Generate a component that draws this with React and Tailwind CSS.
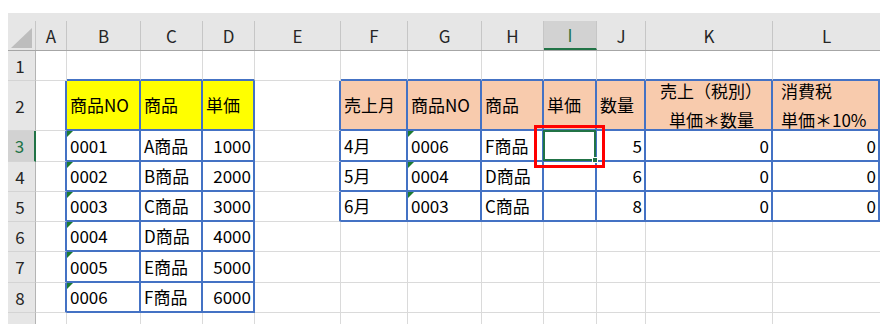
const COLS = ['A', 'B', 'C', 'D', 'E', 'F', 'G', 'H', 'I', 'J', 'K', 'L'];
const ROWS = [1, 2, 3, 4, 5, 6, 7, 8, 9];

const inT1 = (r, c) => r >= 2 && r <= 8 && c >= 1 && c <= 3;
const inT2 = (r, c) => r >= 2 && r <= 5 && c >= 5 && c <= 11;
const inTable = (r, c) => inT1(r, c) || inT2(r, c);

// cell contents by row -> column index
const sheet = {
  2: {
    1: { v: '商品NO' }, 2: { v: '商品' }, 3: { v: '単価' },
    5: { v: '売上月' }, 6: { v: '商品NO' }, 7: { v: '商品' }, 8: { v: '単価' }, 9: { v: '数量' },
    10: { lines: ['売上（税別）', '単価＊数量'], pads: ['pl-[11px]', 'pl-[20px]'] },
    11: { lines: ['消費税', '単価＊10%'], pads: ['pl-[5px]', 'pl-[5px]'] },
  },
};

const products = [
  ['0001', 'A商品', '1000'],
  ['0002', 'B商品', '2000'],
  ['0003', 'C商品', '3000'],
  ['0004', 'D商品', '4000'],
  ['0005', 'E商品', '5000'],
  ['0006', 'F商品', '6000'],
];
products.forEach((p, i) => {
  sheet[i + 3] = { 1: { v: p[0], tri: true }, 2: { v: p[1] }, 3: { v: p[2], right: true } };
});

const sales = [
  ['4月', '0006', 'F商品', '5'],
  ['5月', '0004', 'D商品', '6'],
  ['6月', '0003', 'C商品', '8'],
];
sales.forEach((s, i) => {
  Object.assign(sheet[i + 3], {
    5: { v: s[0] },
    6: { v: s[1], tri: true },
    7: { v: s[2] },
    8: { v: '' },
    9: { v: s[3], right: true },
    10: { v: '0', right: true },
    11: { v: '0', right: true },
  });
});

function Corner() {
  return (
    <div className="flex flex-col justify-end bg-[#e6e6e6] border-b border-b-[#a6a6a6]">
      <div className="h-[29px] flex items-end justify-end pr-[3px] pb-[2px] border-r border-r-[#c6c6c6]">
        <svg width="21" height="20" viewBox="0 0 21 20">
          <polygon points="21,0 21,20 0,20" fill="#bdbdbd" />
        </svg>
      </div>
    </div>
  );
}

function ColHeader({ name, last }) {
  const active = name === 'I';
  return (
    <div className="flex flex-col justify-end bg-[#e6e6e6] border-b border-b-[#a6a6a6]">
      <div
        className={`h-[29px] flex items-center justify-center ${last ? '' : 'border-r border-r-[#c6c6c6]'} ${
          active ? 'bg-[#d2d2d2] border-b-2 border-b-[#217346] text-[#217346]' : 'text-[#262626]'
        }`}
      >
        {name}
      </div>
    </div>
  );
}

function RowHeader({ r }) {
  const active = r === 3;
  return (
    <div
      className={`flex items-center justify-center pr-[3px] border-b border-b-[#d4d4d4] ${
        active
          ? 'bg-[#d2d2d2] border-r-2 border-r-[#217346] text-[#217346]'
          : 'bg-[#e6e6e6] border-r border-r-[#b4b4b4] text-[#262626]'
      }`}
    >
      {/* row 9 is only a sliver at the bottom, its number is out of view */}
      {r < 9 ? r : ''}
    </div>
  );
}

function Cell({ r, c }) {
  const cell = (sheet[r] && sheet[r][c]) || null;
  const right =
    inTable(r, c) || inTable(r, c + 1)
      ? 'border-r-2 border-r-[#4472c4]'
      : c === 11
      ? ''
      : 'border-r border-r-[#dadada]';
  const bottom =
    inTable(r, c) || inTable(r + 1, c) ? 'border-b-2 border-b-[#4472c4]' : 'border-b border-b-[#dadada]';
  let bg = 'bg-white';
  if (r === 2 && inT1(r, c)) bg = 'bg-[#ffff00]';
  if (r === 2 && inT2(r, c)) bg = 'bg-[#f8cbad]';
  const selected = r === 3 && c === 8;

  return (
    <div className={`relative flex items-center ${cell && cell.right ? 'justify-end pr-[2px]' : 'pl-[3px]'} ${right} ${bottom} ${bg} ${selected ? 'z-10' : ''}`}>
      {cell && cell.tri && (
        <div className="absolute left-0 top-0 w-0 h-0 border-t-[6px] border-r-[6px] border-t-[#1d7a32] border-r-transparent" />
      )}
      {cell && cell.lines ? (
        <div className="flex flex-col leading-[29px] whitespace-nowrap">
          {cell.lines.map((l, i) => (
            <span key={i} className={cell.pads[i]}>{l}</span>
          ))}
        </div>
      ) : (
        cell && <span className="whitespace-nowrap">{cell.v}</span>
      )}
      {selected && (
        <>
          <div className="absolute -left-px -top-px -right-px -bottom-px border-2 border-[#217346]">
            <div className="absolute -right-[4px] -bottom-[4px] w-[6px] h-[6px] bg-[#217346] border border-white" />
          </div>
          <div className="absolute -left-[10px] -top-[6px] -right-[10px] -bottom-[8px] border-[3px] border-[#ff0000]" />
        </>
      )}
    </div>
  );
}

export default function App() {
  return (
    <div className="w-[894px] h-[324px] overflow-hidden bg-white pt-[13px] pl-[8px] font-['Noto_Sans_CJK_JP',sans-serif] text-[17px] text-black">
      <div className="grid w-[872px] grid-cols-[28px_31px_74px_62px_52px_86px_67px_74px_62px_53px_49px_127px_107px] grid-rows-[38px_30px_50px_31px_30px_30px_30px_31px_30px_30px]">
        <Corner />
        {COLS.map((name, i) => (
          <ColHeader key={name} name={name} last={i === COLS.length - 1} />
        ))}
        {ROWS.map((r) => [
          <RowHeader key={`h${r}`} r={r} />,
          ...COLS.map((_, c) => <Cell key={`${r}-${c}`} r={r} c={c} />),
        ])}
      </div>
    </div>
  );
}
